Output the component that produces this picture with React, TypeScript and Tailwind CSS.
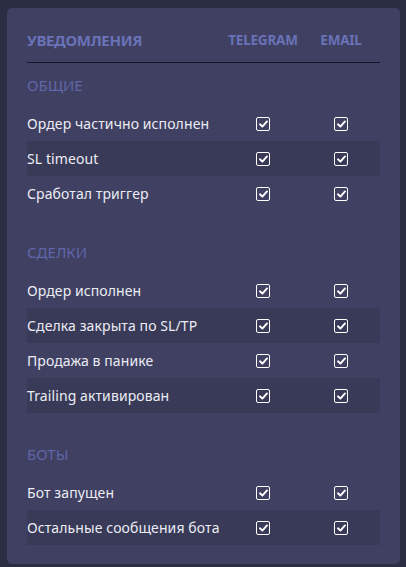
import React, { useState } from 'react';

interface Section {
  title: string;
  items: string[];
}

const SECTIONS: Section[] = [
  {
    title: 'Общие',
    items: ['Ордер частично исполнен', 'SL timeout', 'Сработал триггер'],
  },
  {
    title: 'Сделки',
    items: [
      'Ордер исполнен',
      'Сделка закрыта по SL/TP',
      'Продажа в панике',
      'Trailing активирован',
    ],
  },
  {
    title: 'Боты',
    items: ['Бот запущен', 'Остальные сообщения бота'],
  },
];

const Check: React.FC<{ checked: boolean; onClick: () => void }> = ({ checked, onClick }) => (
  <button
    onClick={onClick}
    className="flex h-[14px] w-[14px] items-center justify-center rounded-[2px] border-[1.5px] border-white"
  >
    {checked && (
      <svg width="9" height="8" viewBox="0 0 9 8">
        <path d="M1 4.3 L3.4 6.6 L8 1.4" fill="none" stroke="#fff" strokeWidth="1.9" strokeLinecap="round" strokeLinejoin="round" />
      </svg>
    )}
  </button>
);

export default function App() {
  const [state, setState] = useState<Record<string, boolean>>({});

  const toggle = (key: string) =>
    setState((s) => ({ ...s, [key]: !(s[key] ?? true) }));

  return (
    <div
      className="h-[567px] w-[406px] bg-[#2b2d42] pl-[7px] pr-[6px] pt-[8px]"
      style={{ fontFamily: '"Noto Sans", "Open Sans", sans-serif' }}
    >
      <div className="rounded-[5px] bg-[#3f4062] px-[20px] pb-[19px] pt-[24px]">
        {/* Header */}
        <div className="grid grid-cols-[1fr_78px_78px] items-center border-b-[1.5px] border-[#16172a] pb-[14px]">
          <span className="text-[15px] font-bold uppercase leading-4 tracking-[-0.3px] text-[#6a72b8]">
            Уведомления
          </span>
          <span className="text-center text-[13.5px] font-bold leading-4 tracking-[-0.2px] text-[#6a72b8]">
            TELEGRAM
          </span>
          <span className="text-center text-[13.5px] font-bold leading-4 tracking-[-0.2px] text-[#6a72b8]">
            EMAIL
          </span>
        </div>

        {SECTIONS.map((section, si) => (
          <div key={section.title} className={si === 0 ? 'mt-[12px]' : 'mt-[31px]'}>
            <div className="mb-[11px] h-5 text-[15px] uppercase leading-5 text-[#6066a8]">
              {section.title}
            </div>
            {section.items.map((item, i) => (
              <div
                key={item}
                className={`grid h-[35px] grid-cols-[1fr_78px_78px] items-center ${
                  i % 2 === 1 ? 'bg-[#383a57]' : ''
                }`}
              >
                <span className="text-[14px] tracking-[0.1px] text-[#ececf4]">{item}</span>
                {['tg', 'email'].map((ch) => (
                  <div key={ch} className="flex justify-center">
                    <Check
                      checked={state[`${item}-${ch}`] ?? true}
                      onClick={() => toggle(`${item}-${ch}`)}
                    />
                  </div>
                ))}
              </div>
            ))}
          </div>
        ))}
      </div>
    </div>
  );
}
